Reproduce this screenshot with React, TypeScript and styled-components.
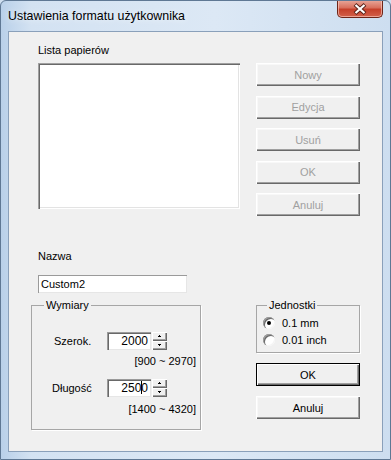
import styled, { createGlobalStyle } from "styled-components";

const Global = createGlobalStyle`
  * { box-sizing: border-box; }
  body {
    margin: 0;
    background: #cfdff0;
    font-family: "Liberation Sans", Arial, sans-serif;
    font-size: 11px;
    color: #000;
  }
`;

const Window = styled.div`
  width: 391px;
  height: 460px;
  display: flex;
  flex-direction: column;
  border: 1px solid #5f7894;
  border-radius: 6px 6px 0 0;
  background: linear-gradient(to right, #b9d0e9 0px, #d3e2f2 30px, #dce8f5 55%, #cddef0 100%);
  overflow: hidden;
`;

const TitleBar = styled.div`
  height: 30px;
  display: flex;
  justify-content: space-between;
  padding-left: 7px;
`;

const Title = styled.span`
  font-family: "Liberation Sans", Arial, sans-serif;
  font-size: 12.4px;
  line-height: 15px;
  margin-top: 8px;
  color: #000;
  text-shadow: 0 0 6px #f4f8fc;
`;

const CloseBtn = styled.div`
  width: 46px;
  height: 18px;
  margin-top: -1px;
  margin-right: 7px;
  display: flex;
  align-items: center;
  justify-content: center;
  border: 1px solid #6e2518;
  border-top: none;
  border-radius: 0 0 5px 5px;
  background: linear-gradient(to bottom, #e9a99c 0%, #d9705d 45%, #c6402a 55%, #d2604a 100%);
  box-shadow: inset 0 0 0 1px rgba(255, 210, 200, 0.6);
`;

const Client = styled.div`
  margin: 0 7px 0 7px;
  height: 421px;
  border: 1px solid #8aa0ba;
  background: #f0f0f0;
  padding: 12px 0 0 22px;
  display: flex;
  flex-direction: column;
`;

const Section = styled.div`
  display: flex;
  gap: 16px;
`;

const LeftCol = styled.div<{ $top?: number }>`
  width: 209px;
  display: flex;
  flex-direction: column;
  padding-top: ${(p) => p.$top ?? 0}px;
`;

const RightCol = styled.div<{ $top: number; $gap: number }>`
  width: 104px;
  display: flex;
  flex-direction: column;
  gap: ${(p) => p.$gap}px;
  padding-top: ${(p) => p.$top}px;
`;

const Label = styled.div<{ $mb?: number }>`
  line-height: 13px;
  padding-left: 7px;
  margin-bottom: ${(p) => p.$mb ?? 0}px;
`;

const ListBox = styled.div`
  margin-left: 7px;
  width: 202px;
  height: 146px;
  background: #fff;
  box-shadow: inset 1px 1px 0 #a0a0a0, inset 2px 2px 0 #696969, inset -1px -1px 0 #fff,
    inset -2px -2px 0 #e3e3e3;
`;

const Button = styled.div<{ $disabled?: boolean; $default?: boolean }>`
  height: 23px;
  display: flex;
  align-items: center;
  justify-content: center;
  background: #f0f0f0;
  color: ${(p) => (p.$disabled ? "#a0a0a0" : "#000")};
  border: ${(p) => (p.$default ? "1px solid #000" : "none")};
  box-shadow: ${(p) =>
    p.$default
      ? "inset 1px 1px 0 #fff, inset -1px -1px 0 #696969, inset -2px -2px 0 #a0a0a0"
      : "inset 1px 1px 0 #fff, inset -1px -1px 0 #696969, inset -2px -2px 0 #a0a0a0, inset 2px 2px 0 #f8f8f8"};
`;

const TextField = styled.div`
  margin: 12px 0 0 7px;
  width: 149px;
  height: 18px;
  padding: 2px 0 0 3px;
  line-height: 14px;
  background: #fff;
  box-shadow: inset 1px 1px 0 #9a9a9a, inset -1px -1px 0 #e6e6e6;
`;

const Group = styled.fieldset<{ $w: number; $mt: number; $pb: number }>`
  width: ${(p) => p.$w}px;
  margin: ${(p) => p.$mt}px 0 0 0;
  padding: 0 4px ${(p) => p.$pb}px 6px;
  border: 1px solid #a6a6a6;
  box-shadow: 1px 1px 0 #fff;
  min-width: 0;
`;

const Legend = styled.legend<{ $ml: number }>`
  margin-left: ${(p) => p.$ml}px;
  padding: 0 2px;
  line-height: 13px;
  font-size: 11px;
`;

const SpinRow = styled.div<{ $mt: number }>`
  display: flex;
  align-items: center;
  margin-top: ${(p) => p.$mt}px;
`;

const SpinLabel = styled.div<{ $indent: number }>`
  width: 69px;
  padding-left: ${(p) => p.$indent}px;
  line-height: 13px;
`;

const SpinInput = styled.div`
  width: 44px;
  height: 18px;
  padding: 2px 3px 0 0;
  text-align: right;
  line-height: 14px;
  font-size: 12px;
  background: #fff;
  box-shadow: inset 1px 1px 0 #9a9a9a, inset 2px 2px 0 #696969, inset -1px -1px 0 #e6e6e6;
`;

const SpinBtns = styled.div`
  margin-left: 1px;
  width: 15px;
  height: 18px;
  display: flex;
  flex-direction: column;
`;

const SpinHalf = styled.div`
  height: 9px;
  display: flex;
  align-items: center;
  justify-content: center;
  background: #f0f0f0;
  box-shadow: inset 1px 1px 0 #fff, inset -1px -1px 0 #696969, inset -2px -2px 0 #a0a0a0;
`;

const Caret = styled.span`
  display: inline-block;
  width: 1px;
  height: 13px;
  margin-right: -1px;
  vertical-align: -2px;
  background: #000;
`;

const Range = styled.div<{ $mt: number }>`
  text-align: right;
  line-height: 13px;
  font-size: 11px;
  margin-top: ${(p) => p.$mt}px;
`;

const RadioRow = styled.div<{ $mt?: number }>`
  height: 17px;
  display: flex;
  align-items: center;
  gap: 7px;
  margin-top: ${(p) => p.$mt ?? 0}px;
  font-size: 11px;
`;

const RadioDot = styled.span<{ $on?: boolean }>`
  width: 12px;
  height: 12px;
  border-radius: 50%;
  background: #fff;
  display: flex;
  align-items: center;
  justify-content: center;
  box-shadow: inset 1px 1px 0 #a0a0a0, inset 2px 2px 0 #696969, inset -1px -1px 0 #f4f4f4;
  &::after {
    content: "";
    width: 4px;
    height: 4px;
    border-radius: 50%;
    background: ${(p) => (p.$on ? "#000" : "transparent")};
  }
`;

const Arrow = ({ up }: { up?: boolean }) => (
  <svg width="5" height="3" viewBox="0 0 5 3">
    <path d={up ? "M2 0h1v1h1v1H1V1h1z" : "M1 0h3v1H3v1H2V1H1z"} fill="#000" />
  </svg>
);

export default function App() {
  return (
    <>
      <Global />
      <Window>
        <TitleBar>
          <Title>Ustawienia formatu użytkownika</Title>
          <CloseBtn>
            <svg width="14" height="12" viewBox="0 0 14 12">
              <path d="M2 1.5l10 9M12 1.5l-10 9" stroke="#5a2218" strokeWidth="4" />
              <path d="M2.5 2l9 8M11.5 2l-9 8" stroke="#fff" strokeWidth="2.2" />
            </svg>
          </CloseBtn>
        </TitleBar>
        <Client>
          <Section>
            <LeftCol>
              <Label $mb={6}>Lista papierów</Label>
              <ListBox />
            </LeftCol>
            <RightCol $top={19} $gap={9.5}>
              <Button $disabled>Nowy</Button>
              <Button $disabled>Edycja</Button>
              <Button $disabled>Usuń</Button>
              <Button $disabled>OK</Button>
              <Button $disabled>Anuluj</Button>
            </RightCol>
          </Section>
          <Section>
            <LeftCol $top={34}>
              <Label>Nazwa</Label>
              <TextField>Custom2</TextField>
              <Group $w={170} $mt={6} $pb={13}>
                <Legend $ml={6}>Wymiary</Legend>
                <SpinRow $mt={20}>
                  <SpinLabel $indent={16}>Szerok.</SpinLabel>
                  <SpinInput>2000</SpinInput>
                  <SpinBtns>
                    <SpinHalf><Arrow up /></SpinHalf>
                    <SpinHalf><Arrow /></SpinHalf>
                  </SpinBtns>
                </SpinRow>
                <Range $mt={5}>[900 ~ 2970]</Range>
                <SpinRow $mt={11}>
                  <SpinLabel $indent={14}>Długość</SpinLabel>
                  <SpinInput>
                    250<Caret />0
                  </SpinInput>
                  <SpinBtns>
                    <SpinHalf><Arrow up /></SpinHalf>
                    <SpinHalf><Arrow /></SpinHalf>
                  </SpinBtns>
                </SpinRow>
                <Range $mt={6}>[1400 ~ 4320]</Range>
              </Group>
            </LeftCol>
            <RightCol $top={83} $gap={10}>
              <Group $w={104} $mt={0} $pb={4}>
                <Legend $ml={4}>Jednostki</Legend>
                <RadioRow $mt={2}>
                  <RadioDot $on />
                  0.1 mm
                </RadioRow>
                <RadioRow>
                  <RadioDot />
                  0.01 inch
                </RadioRow>
              </Group>
              <Button $default>OK</Button>
              <Button>Anuluj</Button>
            </RightCol>
          </Section>
        </Client>
      </Window>
    </>
  );
}
